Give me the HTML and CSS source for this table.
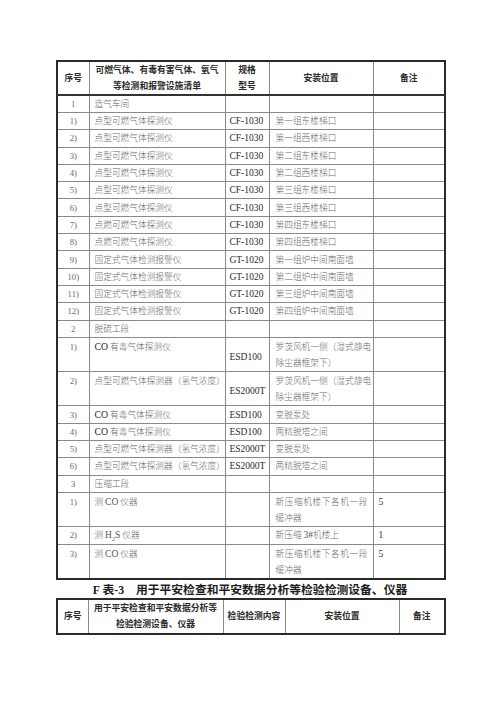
FILE: index.html
```html
<!DOCTYPE html>
<html lang="zh-CN">
<head>
<meta charset="utf-8">
<link rel="stylesheet" href="styles.css">
</head>
<body>
<div class="page">
  <table class="grid t1">
    <colgroup>
      <col class="c1"><col class="c2"><col class="c3"><col class="c4"><col class="c5">
    </colgroup>
    <thead>
      <tr class="hd">
        <th>序号</th>
        <th>可燃气体、有毒有害气体、氧气<br>等检测和报警设施清单</th>
        <th>规格<br>型号</th>
        <th>安装位置</th>
        <th>备注</th>
      </tr>
    </thead>
    <tbody>
      <tr class="r1"><td class="no">1</td><td class="nm">造气车间</td><td class="sp"></td><td class="lc"></td><td class="rm"></td></tr>
      <tr class="r1"><td class="no">1)</td><td class="nm">点型可燃气体探测仪</td><td class="sp">CF-1030</td><td class="lc">第一组东楼梯口</td><td class="rm"></td></tr>
      <tr class="r1"><td class="no">2)</td><td class="nm">点型可燃气体探测仪</td><td class="sp">CF-1030</td><td class="lc">第一组西楼梯口</td><td class="rm"></td></tr>
      <tr class="r1"><td class="no">3)</td><td class="nm">点型可燃气体探测仪</td><td class="sp">CF-1030</td><td class="lc">第二组东楼梯口</td><td class="rm"></td></tr>
      <tr class="r1"><td class="no">4)</td><td class="nm">点型可燃气体探测仪</td><td class="sp">CF-1030</td><td class="lc">第二组西楼梯口</td><td class="rm"></td></tr>
      <tr class="r1"><td class="no">5)</td><td class="nm">点型可燃气体探测仪</td><td class="sp">CF-1030</td><td class="lc">第三组东楼梯口</td><td class="rm"></td></tr>
      <tr class="r1"><td class="no">6)</td><td class="nm">点型可燃气体探测仪</td><td class="sp">CF-1030</td><td class="lc">第三组西楼梯口</td><td class="rm"></td></tr>
      <tr class="r1"><td class="no">7)</td><td class="nm">点燃可燃气体探测仪</td><td class="sp">CF-1030</td><td class="lc">第四组东楼梯口</td><td class="rm"></td></tr>
      <tr class="r1"><td class="no">8)</td><td class="nm">点燃可燃气体探测仪</td><td class="sp">CF-1030</td><td class="lc">第四组西楼梯口</td><td class="rm"></td></tr>
      <tr class="r1"><td class="no">9)</td><td class="nm">固定式气体检测报警仪</td><td class="sp">GT-1020</td><td class="lc">第一组炉中间南面墙</td><td class="rm"></td></tr>
      <tr class="r1"><td class="no">10)</td><td class="nm">固定式气体检测报警仪</td><td class="sp">GT-1020</td><td class="lc">第二组炉中间南面墙</td><td class="rm"></td></tr>
      <tr class="r1"><td class="no">11)</td><td class="nm">固定式气体检测报警仪</td><td class="sp">GT-1020</td><td class="lc">第三组炉中间南面墙</td><td class="rm"></td></tr>
      <tr class="r1"><td class="no">12)</td><td class="nm">固定式气体检测报警仪</td><td class="sp">GT-1020</td><td class="lc">第四组炉中间南面墙</td><td class="rm"></td></tr>
      <tr class="r1"><td class="no">2</td><td class="nm">脱硫工段</td><td class="sp"></td><td class="lc"></td><td class="rm"></td></tr>
      <tr class="r2"><td class="no">1)</td><td class="nm"><span class="dk">CO</span> 有毒气体探测仪</td><td class="sp">ESD100</td><td class="lc"><span class="jl">罗茨风机一侧（湿式静电</span><span class="ln">除尘器框架下）</span></td><td class="rm"></td></tr>
      <tr class="r2"><td class="no">2)</td><td class="nm">点型可燃气体探测器（氢气浓度）</td><td class="sp">ES2000T</td><td class="lc"><span class="jl">罗茨风机一侧（湿式静电</span><span class="ln">除尘器框架下）</span></td><td class="rm"></td></tr>
      <tr class="r1"><td class="no">3)</td><td class="nm"><span class="dk">CO</span> 有毒气体探测仪</td><td class="sp">ESD100</td><td class="lc">变脱泵处</td><td class="rm"></td></tr>
      <tr class="r1"><td class="no">4)</td><td class="nm"><span class="dk">CO</span> 有毒气体探测仪</td><td class="sp">ESD100</td><td class="lc">两精脱塔之间</td><td class="rm"></td></tr>
      <tr class="r1"><td class="no">5)</td><td class="nm">点型可燃气体探测器（氢气浓度）</td><td class="sp">ES2000T</td><td class="lc">变脱泵处</td><td class="rm"></td></tr>
      <tr class="r1"><td class="no">6)</td><td class="nm">点型可燃气体探测器（氢气浓度）</td><td class="sp">ES2000T</td><td class="lc">两精脱塔之间</td><td class="rm"></td></tr>
      <tr class="r1"><td class="no">3</td><td class="nm">压缩工段</td><td class="sp"></td><td class="lc"></td><td class="rm"></td></tr>
      <tr class="r2"><td class="no">1)</td><td class="nm">测 <span class="lt">CO</span> 仪器</td><td class="sp"></td><td class="lc"><span class="jl">新压缩机楼下各机一段</span><span class="ln">缓冲器</span></td><td class="rm">5</td></tr>
      <tr class="r1"><td class="no">2)</td><td class="nm">测 <span class="lt">H<sub>2</sub>S</span> 仪器</td><td class="sp"></td><td class="lc">新压缩 <span class="lt">3#</span>机楼上</td><td class="rm">1</td></tr>
      <tr class="r2"><td class="no">3)</td><td class="nm">测 <span class="lt">CO</span> 仪器</td><td class="sp"></td><td class="lc"><span class="jl">新压缩机楼下各机一段</span><span class="ln">缓冲器</span></td><td class="rm">5</td></tr>
    </tbody>
  </table>

  <h2 class="title">F 表-3　用于平安检查和平安数据分析等检验检测设备、仪器</h2>

  <table class="grid t2">
    <colgroup>
      <col class="d1"><col class="d2"><col class="d3"><col class="d4"><col class="d5">
    </colgroup>
    <thead>
      <tr class="hd2">
        <th>序号</th>
        <th>用于平安检查和平安数据分析等<br>检验检测设备、仪器</th>
        <th>检验检测内容</th>
        <th>安装位置</th>
        <th>备注</th>
      </tr>
    </thead>
  </table>
</div>
</body>
</html>
```

FILE: styles.css
```css
html, body {
  margin: 0;
  padding: 0;
  background: #ffffff;
}

.page {
  padding: 60px 0 0 56px;
  width: 388px;
}

.grid {
  border-collapse: collapse;
  table-layout: fixed;
  width: 388px;
  border: 2px solid #2a2a2a;
  font-family: "Liberation Serif", "Noto Sans CJK SC", serif;
}

.c1 { width: 32px; }
.c2 { width: 136px; }
.c3 { width: 44px; }
.c4 { width: 104px; }
.c5 { width: 72px; }

.d1 { width: 31px; }
.d2 { width: 135px; }
.d3 { width: 62px; }
.d4 { width: 114px; }
.d5 { width: 46px; }

.grid th {
  border: 1px solid #8a8a8a;
  font-family: "Noto Sans CJK SC", sans-serif;
  font-weight: 700;
  font-size: 8.8px;
  line-height: 16px;
  color: #2a2a2a;
  text-align: center;
  vertical-align: middle;
  padding: 0;
}

.hd { height: 34px; }
.hd th { border-bottom: 2px solid #333; }
.hd2 { height: 35px; }

.grid td {
  border: 1px solid #8a8a8a;
  font-size: 8.7px;
  line-height: 16px;
  color: #6a6a6a;
  padding: 0;
  vertical-align: top;
  white-space: nowrap;
}

.r1 { height: 17.3px; }
.r2 { height: 34.3px; }
.r1 td { vertical-align: middle; }
.r2 td { padding-top: 1px; }

.no {
  text-align: center;
  color: #333;
  font-size: 9.5px;
}

.grid td.nm {
  padding-left: 5px;
  font-family: "Noto Sans CJK SC", sans-serif;
  font-weight: 300;
}

.grid td.sp {
  padding-left: 4px;
  color: #2a2a2a;
  font-size: 9.5px;
  vertical-align: middle;
}

.grid .r2 td.sp {
  padding-top: 4px;
}

.grid td.lc {
  padding-left: 6px;
  padding-right: 5px;
  font-family: "Noto Sans CJK SC", sans-serif;
  font-weight: 300;
}

.grid td.rm {
  padding-left: 5px;
  color: #333;
  font-size: 9.5px;
}

.dk {
  font-family: "Liberation Serif", serif;
  font-size: 9.8px;
  color: #2a2a2a;
  font-weight: 400;
}

.lt {
  font-family: "Liberation Serif", serif;
  font-size: 9.5px;
  color: #555;
  font-weight: 400;
}

.lt sub {
  font-size: 6px;
  line-height: 0;
}

.jl {
  display: block;
  text-align: justify;
  text-align-last: justify;
}

.ln {
  display: block;
}

.title {
  margin: 0;
  height: 16px;
  padding-top: 2px;
  line-height: 16px;
  text-align: center;
  font-family: "Liberation Serif", "Noto Sans CJK SC", serif;
  font-size: 11.8px;
  font-weight: 700;
  color: #1e1e1e;
  width: 388px;
}
```
